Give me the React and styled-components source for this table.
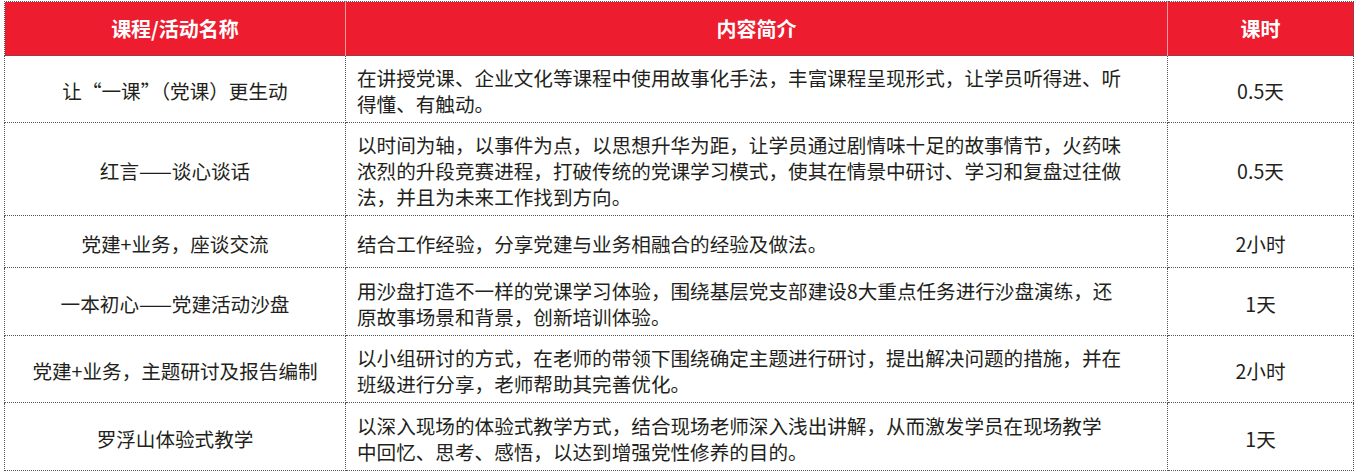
import styled, { createGlobalStyle } from "styled-components";

const GlobalStyle = createGlobalStyle`
  html, body {
    margin: 0;
    padding: 0;
    background: #fff;
  }
  body {
    font-family: "Noto Sans CJK SC", "Noto Sans", sans-serif;
  }
`;

const courses = [
  {
    name: "让“一课”（党课）更生动",
    lines: [
      "在讲授党课、企业文化等课程中使用故事化手法，丰富课程呈现形式，让学员听得进、听",
      "得懂、有触动。",
    ],
    hours: "0.5天",
    height: 67,
  },
  {
    name: "红言——谈心谈话",
    lines: [
      "以时间为轴，以事件为点，以思想升华为距，让学员通过剧情味十足的故事情节，火药味",
      "浓烈的升段竞赛进程，打破传统的党课学习模式，使其在情景中研讨、学习和复盘过往做",
      "法，并且为未来工作找到方向。",
    ],
    hours: "0.5天",
    height: 93,
  },
  {
    name: "党建+业务，座谈交流",
    lines: ["结合工作经验，分享党建与业务相融合的经验及做法。"],
    hours: "2小时",
    height: 52,
  },
  {
    name: "一本初心——党建活动沙盘",
    lines: [
      "用沙盘打造不一样的党课学习体验，围绕基层党支部建设8大重点任务进行沙盘演练，还",
      "原故事场景和背景，创新培训体验。",
    ],
    hours: "1天",
    height: 68,
  },
  {
    name: "党建+业务，主题研讨及报告编制",
    lines: [
      "以小组研讨的方式，在老师的带领下围绕确定主题进行研讨，提出解决问题的措施，并在",
      "班级进行分享，老师帮助其完善优化。",
    ],
    hours: "2小时",
    height: 67,
  },
  {
    name: "罗浮山体验式教学",
    lines: [
      "以深入现场的体验式教学方式，结合现场老师深入浅出讲解，从而激发学员在现场教学",
      "中回忆、思考、感悟，以达到增强党性修养的目的。",
    ],
    hours: "1天",
    height: 68,
  },
];

const App = () => {
  return (
    <Page>
      <GlobalStyle />
      <Table>
        <colgroup>
          <col style={{ width: 341 }} />
          <col style={{ width: 822 }} />
          <col style={{ width: 186 }} />
        </colgroup>
        <thead>
          <tr>
            <Th>课程/活动名称</Th>
            <Th>内容简介</Th>
            <Th>课时</Th>
          </tr>
        </thead>
        <tbody>
          {courses.map((c) => (
            <Tr key={c.name} $h={c.height}>
              <Td $center>{c.name}</Td>
              <Td>
                {c.lines.map((line) => (
                  <Line key={line}>{line}</Line>
                ))}
              </Td>
              <Td $center>{c.hours}</Td>
            </Tr>
          ))}
        </tbody>
      </Table>
    </Page>
  );
};

export default App;

const Page = styled.div`
  padding: 1px 0 0 4px;
`;

const Table = styled.table`
  width: 1350px;
  border-collapse: collapse;
  table-layout: fixed;
  border: 1px dotted #555;
`;

const Th = styled.th`
  height: 53px;
  padding: 0;
  background: #ed1c2e;
  color: #fff;
  font-size: 20px;
  font-weight: 700;
  text-align: center;
  vertical-align: middle;
  border-top: 1px dotted #555;
  border-left: 1px solid #f59aa2;
  border-right: 1px solid #f59aa2;

  &:first-child {
    border-left: 1px dotted #555;
  }
  &:last-child {
    border-right: 1px dotted #555;
  }
`;

const Tr = styled.tr`
  height: ${(p) => p.$h}px;
`;

const Td = styled.td`
  padding: ${(p) => (p.$center ? "4px 0 0" : "4px 8px 0 11px")};
  border: 1px dotted #555;
  color: #231f20;
  font-size: 19.6px;
  line-height: 26px;
  text-align: ${(p) => (p.$center ? "center" : "left")};
  vertical-align: middle;
`;

const Line = styled.div`
  white-space: nowrap;
`;
